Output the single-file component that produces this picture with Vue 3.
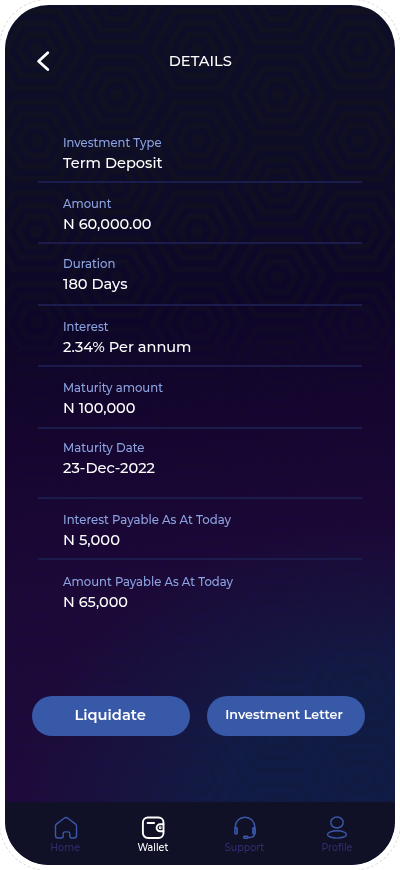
<script setup>
const rows = [
  { label: 'Investment Type', value: 'Term Deposit', lw: 98.5, vw: 99.5 },
  { label: 'Amount', value: 'N 60,000.00', lw: 48.5, vw: 88.5 },
  { label: 'Duration', value: '180 Days', lw: 52.5, vw: 64.5 },
  { label: 'Interest', value: '2.34% Per annum', lw: 45.5, vw: 128.5 },
  { label: 'Maturity amount', value: 'N 100,000', lw: 100, vw: 72.5 },
  { label: 'Maturity Date', value: '23-Dec-2022', lw: 81.5, vw: 92 },
  { label: 'Interest Payable As At Today', value: 'N 5,000', lw: 168, vw: 57 },
  { label: 'Amount Payable As At Today', value: 'N 65,000', lw: 170, vw: 65 },
]

// Stretches a text run to the given advance width.
const vFit = {
  mounted(el, { value }) {
    const natural = el.getBoundingClientRect().width
    if (natural) el.style.transform = `scaleX(${value / natural})`
  },
}

// Hexagon outline with flat top and bottom edges.
const hex = (cx, cy, s) => {
  const x = 53.7 * s
  const y = 45.5 * s
  return `M${cx - x} ${cy}L${cx - x / 2} ${cy - y}H${cx + x / 2}L${cx + x} ${cy}L${cx + x / 2} ${cy + y}H${cx - x / 2}Z`
}
const centers = [[0, 0], [161, 0], [0, 91], [161, 91], [80.5, 45.5]]
const rings = [0.84, 0.57, 0.33]
</script>

<template>
  <div class="frame">
    <main class="phone">
      <svg class="pattern" width="390" height="797" aria-hidden="true">
        <defs>
          <pattern id="hexes" x="31.5" y="-1" width="161" height="91" patternUnits="userSpaceOnUse" patternTransform="translate(0 -45.5)">
            <template v-for="(c, i) in centers" :key="i">
              <path v-for="r in rings" :key="r" :d="hex(c[0], c[1], r)" class="ring" />
              <path :d="hex(c[0], c[1], 0.13)" class="core" />
            </template>
          </pattern>
        </defs>
        <rect width="390" height="797" fill="url(#hexes)" />
      </svg>

      <header class="head">
        <button class="back" aria-label="Back">
          <svg width="14" height="22" viewBox="0 0 14 22"><path d="M11.8 2.800 2.600 11.300l9.200 8.200" /></svg>
        </button>
        <h1><span v-fit="63" class="fit center">DETAILS</span></h1>
      </header>

      <section class="list">
        <div v-for="row in rows" :key="row.label" class="row">
          <div class="label"><span v-fit="row.lw" class="fit">{{ row.label }}</span></div>
          <div class="value"><span v-fit="row.vw" class="fit">{{ row.value }}</span></div>
        </div>
      </section>

      <div class="actions">
        <button class="pill big"><span v-fit="71.5" class="fit center">Liquidate</span></button>
        <button class="pill"><span v-fit="117.5" class="fit center">Investment Letter</span></button>
      </div>

      <nav class="tabs">
        <a class="tab">
          <svg width="26" height="24" viewBox="0 0 26 24"><path d="M2.500 10.200c0-1 .4-1.700 1.200-2.300l7.500-5.700c1.100-.8 2.500-.8 3.600 0l7.500 5.700c.8.600 1.200 1.300 1.200 2.300v9.300c0 1.500-1 2.500-2.500 2.500h-2.300c-1.200 0-1.900-.7-1.900-1.900v-2.300c0-1.200-.7-1.900-1.900-1.900h-2.800c-1.200 0-1.900.7-1.900 1.900v2.300c0 1.200-.7 1.900-1.900 1.900H5c-1.500 0-2.500-1-2.500-2.500z" /></svg>
          <span v-fit="30" class="fit center">Home</span>
        </a>
        <a class="tab active">
          <svg width="26" height="24" viewBox="0 0 26 24"><rect x="2.900" y="1.500" width="20.600" height="20.500" rx="5" /><path d="M7.600 7h6.500M23.400 8.300h-3.300a3.500 3.500 0 0 0 0 7h3.300" /><circle cx="20.200" cy="11.800" r=".5" /></svg>
          <span v-fit="31" class="fit center">Wallet</span>
        </a>
        <a class="tab">
          <svg width="26" height="24" viewBox="0 0 26 24"><path d="M3.200 12v-1a9.800 9.800 0 0 1 19.600 0v6c0 3-1.900 4.500-4.800 4.500h-2M5 12v5.500M21 12v5.500" /><rect x="2.800" y="11.500" width="2.200" height="6.500" rx="1.100" /><rect x="21" y="11.500" width="2.200" height="6.500" rx="1.100" /><rect x="11.500" y="20.300" width="4.500" height="2" rx="1" /></svg>
          <span v-fit="39.5" class="fit center">Support</span>
        </a>
        <a class="tab">
          <svg width="26" height="24" viewBox="0 0 26 24"><ellipse cx="13" cy="6.500" rx="6.200" ry="5.500" /><ellipse cx="13" cy="18.400" rx="9.500" ry="3.700" /></svg>
          <span v-fit="31" class="fit center">Profile</span>
        </a>
      </nav>
    </main>
  </div>
</template>

<style>
body {
  background: #fff;
}
</style>

<style scoped>
.frame {
  position: relative;
  box-sizing: border-box;
  width: 400px;
  height: 870px;
  padding: 5px;
  overflow: hidden;
}
.frame::before {
  content: '';
  position: absolute;
  inset: -1px;
  border: 1px dashed #dedede;
  border-radius: 49px;
}
.phone {
  position: relative;
  box-sizing: border-box;
  width: 390px;
  height: 860px;
  border-radius: 44px;
  overflow: hidden;
  display: flex;
  flex-direction: column;
  font-family: Montserrat, Inter, sans-serif;
  font-weight: 500;
  color: #fff;
  background:
    radial-gradient(ellipse 360px 270px at 95% 92%, #111c46 40%, rgba(17, 28, 70, 0) 100%),
    linear-gradient(174deg, #0d0e27 0%, #0d0d28 19%, #0d0628 35%, #150530 48%, #1c0839 65%, #200a3e 92%);
}
.pattern {
  position: absolute;
  left: 0;
  top: 0;
  opacity: 0.42;
  -webkit-mask-image: linear-gradient(#000 25%, rgba(0, 0, 0, 0.2) 50%);
  mask-image: linear-gradient(#000 25%, rgba(0, 0, 0, 0.2) 50%);
}
.ring {
  fill: none;
  stroke: #17171c;
  stroke-width: 6;
}
.core {
  fill: #17171c;
}
.fit {
  display: inline-block;
  white-space: nowrap;
  transform-origin: left center;
}
.center {
  transform-origin: center;
}
.head {
  position: relative;
  display: grid;
  grid-template-columns: 60px 1fr 60px;
  align-items: center;
  height: 112px;
}
.head h1 {
  margin: 0;
  text-align: center;
  font-size: 15px;
  line-height: 18px;
  font-weight: 500;
}
.back {
  display: flex;
  justify-content: flex-end;
  padding: 0 15px 0 0;
  border: 0;
  background: none;
}
.back path {
  fill: none;
  stroke: #fff;
  stroke-width: 2.800;
  stroke-linecap: round;
  stroke-linejoin: round;
}
.list {
  position: relative;
  height: 577px;
  padding: 11px 33px 0;
  box-sizing: border-box;
}
.row {
  box-sizing: border-box;
  height: 61px;
  padding: 11px 0 0 24.500px;
  border-bottom: 2px solid #1c1c4c;
}
.row:nth-child(1) { height: 55px; padding-top: 5px; }
.row:nth-child(3) { height: 62px; padding-top: 10px; }
.row:nth-child(5) { height: 62px; }
.row:nth-child(6) { height: 70px; padding-top: 9px; }
.row:nth-child(8) { height: 64px; padding-top: 12px; border-bottom: 0; }
.label, .value {
  height: 20px;
  line-height: 20px;
}
.label {
  color: #8da4e0;
  font-size: 12.400px;
}
.value {
  font-size: 15.300px;
}
.actions {
  position: relative;
  display: flex;
  gap: 16.500px;
  padding: 2px 27px 0;
  height: 108px;
  box-sizing: border-box;
}
.pill {
  width: 158px;
  height: 40px;
  padding: 0 3px 4px 0;
  border: 0;
  border-radius: 20px;
  background: #3858a8;
  color: #fff;
  font: 600 13.200px Montserrat, Inter, sans-serif;
}
.big {
  font-size: 15.300px;
  padding: 0 1px 3px 0;
}
.tabs {
  position: relative;
  height: 63px;
  display: grid;
  grid-template-columns: 91px 84px 99px 85px;
  padding-left: 15px;
  background: #101126;
}
.tab {
  display: flex;
  flex-direction: column;
  align-items: center;
  padding-top: 14px;
  font-size: 10.400px;
  line-height: 15px;
  color: #302c70;
}
.tab svg {
  fill: none;
  stroke: #3b57a9;
  stroke-width: 1.400;
  stroke-linecap: round;
  stroke-linejoin: round;
}
.active {
  color: #fff;
}
.active svg {
  stroke: #fff;
  stroke-width: 1.900;
}
</style>
